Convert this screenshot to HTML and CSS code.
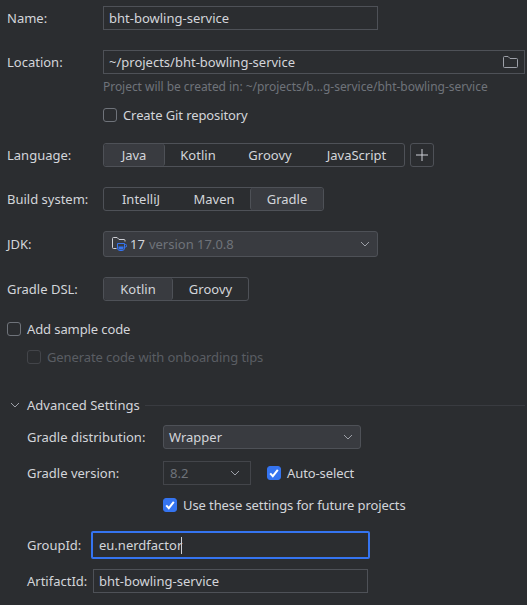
FILE: index.html
```html
<!DOCTYPE html>
<html lang="en">
<head>
    <meta charset="UTF-8">
    <title>New Project</title>
    <link rel="stylesheet" href="styles.css">
</head>
<body>
    <div class="row row-name">
        <label class="label">Name:</label>
        <div class="field field-name">bht-bowling-service</div>
    </div>

    <div class="row row-location">
        <label class="label">Location:</label>
        <div class="field field-location">
            ~/projects/bht-bowling-service
            <svg class="folder-icon" width="15" height="12" viewBox="0 0 15 12" fill="none">
                <path d="M.5 10.5v-9a1 1 0 0 1 1-1h3.6l1.9 2h6.5a1 1 0 0 1 1 1v7a1 1 0 0 1-1 1h-12a1 1 0 0 1-1-1z" stroke="#9da0a8"/>
            </svg>
        </div>
    </div>
    <div class="hint">Project will be created in: ~/projects/b...g-service/bht-bowling-service</div>
    <div class="check-line check-git">
        <span class="checkbox"></span>
        <span>Create Git repository</span>
    </div>

    <div class="row row-language">
        <label class="label">Language:</label>
        <div class="segments">
            <span class="seg seg-active seg-java">Java</span>
            <span class="seg seg-kotlin">Kotlin</span>
            <span class="seg seg-groovy">Groovy</span>
            <span class="seg seg-js">JavaScript</span>
        </div>
        <span class="plus-button">
            <svg width="14" height="14" viewBox="0 0 14 14" fill="none">
                <path d="M7 1v12M1 7h12" stroke="#ced0d6"/>
            </svg>
        </span>
    </div>

    <div class="row row-build">
        <label class="label">Build system:</label>
        <div class="segments">
            <span class="seg seg-intellij">IntelliJ</span>
            <span class="seg seg-maven">Maven</span>
            <span class="seg seg-active seg-gradle">Gradle</span>
        </div>
    </div>

    <div class="row row-jdk">
        <label class="label">JDK:</label>
        <div class="select select-jdk">
            <svg class="jdk-icon" width="16" height="16" viewBox="0 0 16 16" fill="none">
                <path d="M5.5 12.5h-3a1 1 0 0 1-1-1v-9a1 1 0 0 1 1-1h3.6l1.9 2h5a1 1 0 0 1 1 1v1" stroke="#ced0d6"/>
                <path d="M6.5 7.5h7v4.5a2.5 2.5 0 0 1-2.5 2.5h-2a2.5 2.5 0 0 1-2.5-2.5z" stroke="#3574f0"/>
                <path d="M7.5 10.5h5v1.5a1.5 1.5 0 0 1-1.5 1.5h-2a1.5 1.5 0 0 1-1.5-1.5z" fill="#3574f0"/>
                <path d="M13.5 8.5h1a1 1 0 0 1 0 2.5h-1" stroke="#3574f0"/>
            </svg>
            <span>17</span>
            <span class="muted">version 17.0.8</span>
            <svg class="chevron" width="10" height="6" viewBox="0 0 10 6" fill="none">
                <path d="M1 1l4 4 4-4" stroke="#9da0a8"/>
            </svg>
        </div>
    </div>

    <div class="row row-dsl">
        <label class="label">Gradle DSL:</label>
        <div class="segments">
            <span class="seg seg-active seg-dsl-kotlin">Kotlin</span>
            <span class="seg seg-dsl-groovy">Groovy</span>
        </div>
    </div>

    <div class="check-line check-sample">
        <span class="checkbox"></span>
        <span>Add sample code</span>
    </div>
    <div class="check-line check-tips">
        <span class="checkbox checkbox-disabled"></span>
        <span class="disabled-text">Generate code with onboarding tips</span>
    </div>

    <div class="advanced">
        <svg class="advanced-arrow" width="10" height="6" viewBox="0 0 10 6" fill="none">
            <path d="M1 1l4 4 4-4" stroke="#9da0a8"/>
        </svg>
        <span>Advanced Settings</span>
        <span class="advanced-line"></span>
    </div>

    <div class="advanced-body">
        <div class="row row-dist">
            <label class="label label-wide">Gradle distribution:</label>
            <div class="select select-dist">
                Wrapper
                <svg class="chevron" width="10" height="6" viewBox="0 0 10 6" fill="none">
                    <path d="M1 1l4 4 4-4" stroke="#9da0a8"/>
                </svg>
            </div>
        </div>

        <div class="row row-version">
            <label class="label label-wide">Gradle version:</label>
            <div class="select select-version">
                <span class="muted">8.2</span>
                <svg class="chevron" width="10" height="6" viewBox="0 0 10 6" fill="none">
                    <path d="M1 1l4 4 4-4" stroke="#9da0a8"/>
                </svg>
            </div>
            <div class="check-line check-auto">
                <span class="checkbox checkbox-on">
                    <svg width="10" height="10" viewBox="0 0 10 10" fill="none"><path d="M1.2 5.4l2.6 2.8 5-6.4" stroke="#fff" stroke-width="2"/></svg>
                </span>
                <span>Auto-select</span>
            </div>
        </div>

        <div class="check-line check-future">
            <span class="checkbox checkbox-on">
                <svg width="10" height="10" viewBox="0 0 10 10" fill="none"><path d="M1.2 5.4l2.6 2.8 5-6.4" stroke="#fff" stroke-width="2"/></svg>
            </span>
            <span>Use these settings for future projects</span>
        </div>

        <div class="row row-group">
            <label class="label label-group">GroupId:</label>
            <div class="field field-group">eu.nerdfactor<span class="caret"></span></div>
        </div>

        <div class="row row-artifact">
            <label class="label label-artifact">ArtifactId:</label>
            <div class="field field-artifact">bht-bowling-service</div>
        </div>
    </div>
</body>
</html>
```

FILE: styles.css
```css
* {
    margin: 0;
    padding: 0;
    box-sizing: border-box;
}

html, body {
    height: 100%;
    overflow: hidden;
}

body {
    background: #2b2d30;
    color: #d3d5da;
    font-family: "Noto Sans", sans-serif;
    font-size: 13px;
    line-height: 18px;
    padding: 6px 2px 0 7px;
}

.row {
    display: flex;
    align-items: center;
    height: 24px;
}

.label {
    width: 96px;
    flex-shrink: 0;
}

.field {
    height: 24px;
    border: 1px solid #4e5157;
    padding-left: 5px;
    display: flex;
    align-items: center;
    white-space: nowrap;
}

.field-name {
    width: 275px;
}

.row-location {
    margin-top: 20px;
}

.field-location {
    width: 422px;
    justify-content: space-between;
    padding-right: 6px;
}

.folder-icon {
    display: block;
}

.hint {
    margin: 4px 0 0 96px;
    color: #6f737a;
    font-size: 12px;
    line-height: 18px;
    letter-spacing: -.04px;
}

.check-line {
    display: flex;
    align-items: center;
    gap: 6px;
    height: 18px;
    white-space: nowrap;
    letter-spacing: -.1px;
}

.checkbox {
    width: 14px;
    height: 14px;
    border: 1px solid #6f737a;
    border-radius: 3px;
    flex-shrink: 0;
    display: flex;
    align-items: center;
    justify-content: center;
}

.checkbox-on {
    background: #3574f0;
    border-color: #3574f0;
}

.checkbox-disabled {
    border-color: #43454a;
}

.disabled-text {
    color: #5a5d63;
}

.check-git {
    margin: 10px 0 0 96px;
}

.row-language {
    margin-top: 19px;
}

.segments {
    display: flex;
    height: 24px;
    border: 1px solid #4e5157;
    border-radius: 3px;
}

.seg {
    display: flex;
    align-items: center;
    justify-content: center;
    border-radius: 3px;
}

.seg-active {
    background: #393b40;
}

.seg-java {
    width: 61px;
    border-right: 1px solid #4e5157;
}

.seg-kotlin {
    width: 66px;
}

.seg-groovy {
    width: 78px;
}

.seg-js {
    width: 95px;
}

.plus-button {
    margin-left: 5px;
    width: 24px;
    height: 24px;
    border: 1px solid #4e5157;
    border-radius: 3px;
    display: flex;
    align-items: center;
    justify-content: center;
}

.row-build {
    margin-top: 20px;
}

.seg-intellij {
    width: 74px;
}

.seg-maven {
    width: 72px;
}

.seg-gradle {
    width: 73px;
    border-left: 1px solid #4e5157;
}

.row-jdk {
    margin-top: 20px;
    height: 26px;
}

.select {
    height: 24px;
    border: 1px solid #4e5157;
    border-radius: 3px;
    background: #393b40;
    display: flex;
    align-items: center;
    padding-left: 5px;
}

.select-jdk {
    width: 275px;
    height: 26px;
    gap: 4px;
    padding-left: 7px;
}

.jdk-icon {
    display: block;
    margin-right: -1px;
}

.muted {
    color: #6f737a;
}

.chevron {
    margin-left: auto;
    margin-right: 7px;
    display: block;
}

.row-dsl {
    margin-top: 20px;
}

.seg-dsl-kotlin {
    width: 69px;
    border-right: 1px solid #4e5157;
}

.seg-dsl-groovy {
    width: 75px;
}

.check-sample {
    margin-top: 19px;
}

.check-tips {
    margin: 10px 0 0 20px;
}

.advanced {
    display: flex;
    align-items: center;
    height: 18px;
    margin-top: 30px;
    padding-left: 3px;
}

.advanced-arrow {
    display: block;
    margin-right: 7px;
}

.advanced-line {
    flex: 1;
    height: 1px;
    background: #393b40;
    margin-left: 5px;
}

.advanced-body {
    padding: 11px 0 0 20px;
}

.label-wide {
    width: 136px;
}

.select-dist {
    width: 198px;
}

.row-version {
    margin-top: 12px;
}

.select-version {
    width: 88px;
    background: none;
    border-color: #43454a;
    border-radius: 0;
    padding-left: 6px;
}

.select-version .chevron {
    margin-right: 10px;
}

.check-auto {
    margin-left: 16px;
}

.check-future {
    margin: 11px 0 0 136px;
}

.row-group {
    margin-top: 17px;
    height: 28px;
}

.label-group {
    width: 64px;
}

.field-group {
    width: 279px;
    height: 28px;
    border: 2px solid #3574f0;
    border-radius: 2px;
    padding-left: 6px;
}

.caret {
    width: 1px;
    height: 17px;
    background: #ced0d6;
    margin-left: -1px;
}

.row-artifact {
    margin-top: 10px;
}

.label-artifact {
    width: 66px;
}

.field-artifact {
    width: 275px;
    padding-left: 5px;
}
```
